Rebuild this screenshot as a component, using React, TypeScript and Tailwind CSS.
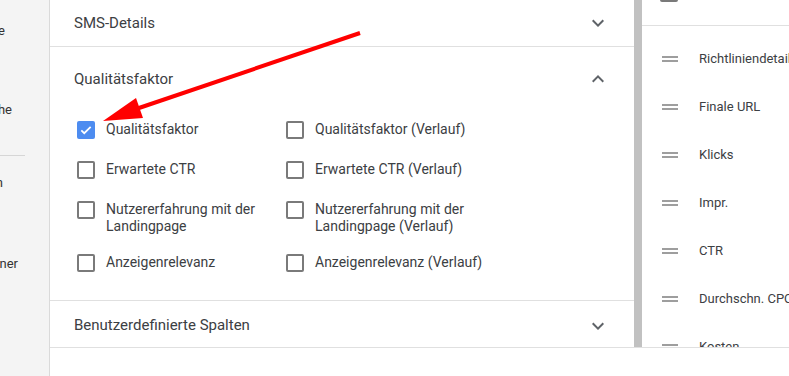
import React from "react";

const Chevron = ({ up = false }: { up?: boolean }) => (
  <svg width="24" height="24" viewBox="0 0 24 24" className="shrink-0">
    {up ? (
      <path d="M12 8l-6 6 1.41 1.41L12 10.83l4.59 4.58L18 14z" fill="#5f6368" />
    ) : (
      <path d="M16.59 8.59L12 13.17 7.41 8.59 6 10l6 6 6-6z" fill="#5f6368" />
    )}
  </svg>
);

const DragHandle = () => (
  <svg width="24" height="24" viewBox="0 0 24 24" className="shrink-0">
    <path d="M20 9H4v2h16V9zM4 15h16v-2H4v2z" fill="#9e9e9e" />
  </svg>
);

const Box = ({ checked = false }: { checked?: boolean }) =>
  checked ? (
    <div className="ml-[3px] mr-[11px] mt-[1px] flex h-[18px] w-[18px] shrink-0 items-center justify-center rounded-[2px] bg-[#4d8cf0]">
      <svg width="14" height="14" viewBox="0 0 24 24">
        <path d="M4 12.5l5 5L20 6.5" fill="none" stroke="#fff" strokeWidth="3" />
      </svg>
    </div>
  ) : (
    <div className="ml-[3px] mr-[11px] mt-[1px] h-[18px] w-[18px] shrink-0 rounded-[2px] border-2 border-[#7a7a7a]" />
  );

const Item = ({ label, checked }: { label: string; checked?: boolean }) => (
  <div className="flex min-h-[22px] items-start">
    <Box checked={checked} />
    <span className="pt-[1px] text-[14px] leading-[17px] text-[#3c4043]">{label}</span>
  </div>
);

const columns = ["Richtliniendetails", "Finale URL", "Klicks", "Impr.", "CTR", "Durchschn. CPC", "Kosten"];

export default function App() {
  return (
    <div
      className="relative flex h-[376px] w-[789px] overflow-hidden bg-white"
      style={{ fontFamily: "Roboto, 'Liberation Sans', sans-serif" }}
    >
      <aside className="flex w-[50px] shrink-0 flex-col overflow-hidden border-r border-[#dadada] bg-[#f4f4f4] pt-[23px]">
        <div className="flex h-[16px] w-[5px] justify-end">
          <span className="shrink-0 whitespace-nowrap text-[13px] leading-[16px] text-[#333]">Anzeige</span>
        </div>
        <div className="mt-[63px] flex h-[16px] w-[12px] justify-end">
          <span className="shrink-0 whitespace-nowrap text-[13px] leading-[16px] text-[#333]">Suche</span>
        </div>
        <div className="mt-[37px] h-px w-[25px] bg-[#d6d6d6]" />
        <div className="mt-[19px] flex h-[16px] w-[3px] justify-end">
          <span className="shrink-0 whitespace-nowrap text-[13px] leading-[16px] text-[#333]">Kampagnen</span>
        </div>
        <div className="mt-[65px] flex h-[16px] w-[18px] justify-end">
          <span className="shrink-0 whitespace-nowrap text-[13px] leading-[16px] text-[#333]">Planner</span>
        </div>
      </aside>

      <div className="flex flex-1 flex-col">
        <div className="flex h-[348px] shrink-0 border-b border-[#e0e0e0]">
          <main className="w-[584px] shrink-0 overflow-hidden">
            <div className="-mt-[2px] flex h-[49px] items-center justify-between border-b border-[#e0e0e0] px-[24px] pt-[2px]">
              <span className="text-[15px] text-[#3c4043]">SMS-Details</span>
              <Chevron />
            </div>
            <div className="border-b border-[#e0e0e0] pb-[25px]">
              <div className="flex h-[62px] items-center justify-between px-[24px] pt-[2px]">
                <span className="text-[15px] text-[#3c4043]">Qualitätsfaktor</span>
                <Chevron up />
              </div>
              <div className="grid grid-cols-[209px_209px] gap-y-[18px] px-[24px] pt-[11px]">
                <Item label="Qualitätsfaktor" checked />
                <Item label="Qualitätsfaktor (Verlauf)" />
                <Item label="Erwartete CTR" />
                <Item label="Erwartete CTR (Verlauf)" />
                <Item label="Nutzererfahrung mit der Landingpage" />
                <Item label="Nutzererfahrung mit der Landingpage (Verlauf)" />
                <Item label="Anzeigenrelevanz" />
                <Item label="Anzeigenrelevanz (Verlauf)" />
              </div>
            </div>
            <div className="flex h-[47px] items-center justify-between px-[24px] pt-[2px]">
              <span className="text-[15px] text-[#3c4043]">Benutzerdefinierte Spalten</span>
              <Chevron />
            </div>
          </main>
          <div className="w-[8px] shrink-0 bg-[#c1c1c1]" />
          <section className="flex-1 overflow-hidden">
            <div className="flex h-[26px] items-start border-b border-[#e0e0e0] pl-[18px]">
              <div className="-mt-[16px] h-[18px] w-[18px] rounded-[2px] border-2 border-[#7a7a7a]" />
            </div>
            <div className="pt-[9px]">
              {columns.map((c) => (
                <div key={c} className="flex h-[48px] items-center gap-[17px] pl-[16px]">
                  <DragHandle />
                  <span className="whitespace-nowrap text-[13px] text-[#3c4043]">{c}</span>
                </div>
              ))}
            </div>
          </section>
        </div>
        <div className="flex-1 bg-white" />
      </div>

      <svg className="pointer-events-none absolute left-0 top-0" width="789" height="376">
        <line x1="360" y1="33" x2="136" y2="109" stroke="#ff0000" strokeWidth="4" />
        <polygon points="103,121 136,98 143,118" fill="#ff0000" />
      </svg>
    </div>
  );
}
